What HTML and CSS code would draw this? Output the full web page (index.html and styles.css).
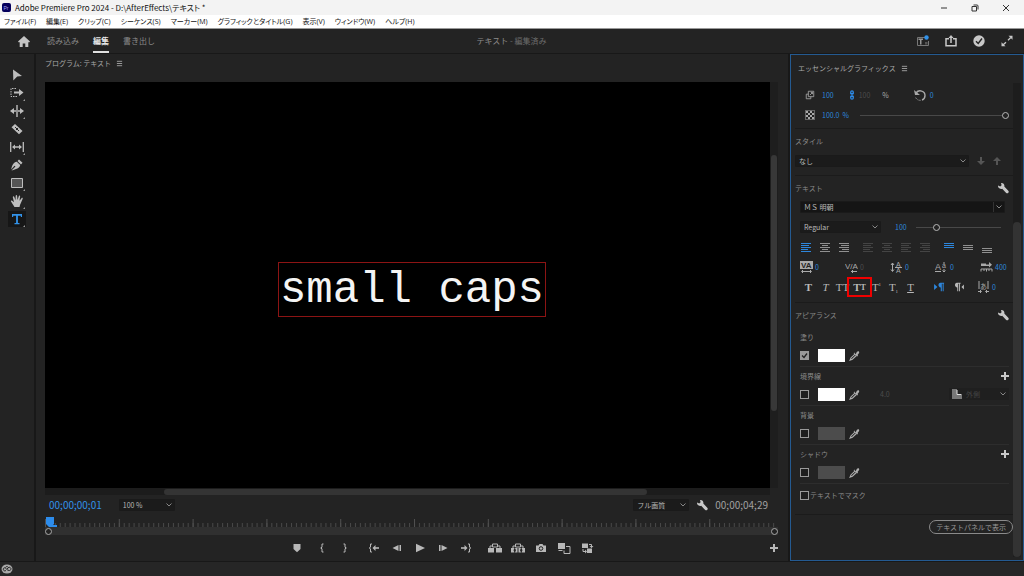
FILE: index.html
```html
<!DOCTYPE html>
<html lang="ja">
<head>
<meta charset="utf-8">
<meta name="viewport" content="width=device-width, initial-scale=1">
<title>Adobe Premiere Pro 2024</title>
<link rel="stylesheet" href="styles.css">
</head>
<body>
<svg class="sprite" aria-hidden="true">
  <symbol id="wrench" viewBox="0 0 12 12"><path d="M1 3.400 3.200 4.400 4.600 3.200 4 1C6 .5 7.900 2.200 7.300 4.600L11.500 9C12.300 10.400 10.600 12 9.200 11.100L5.200 6.700C2.800 7.500.7 5.700 1 3.400Z"/></symbol>
  <symbol id="menu" viewBox="0 0 8 8"><path d="M1 1.500H7M1 4H7M1 6.500H7" fill="none" stroke="currentColor"/></symbol>
  <symbol id="plus" viewBox="0 0 8 8"><path d="M3 0H5V3H8V5H5V8H3V5H0V3H3Z"/></symbol>
  <symbol id="dropper" viewBox="0 0 12 12"><path d="M6.200 3.500 7.300 4.600 8.500 2.200C9.500.6 11.800 1.300 11 3.300L9.300 5.500 9.900 6.200 8.800 7.200 5 3.500 6 2.600Z"/><path d="M6.500 4.500 2.300 8.400 1.200 11 3.700 10 8 6" fill="none" stroke="currentColor" stroke-width="1.200"/></symbol>
  <symbol id="lines-left" viewBox="0 0 12 10"><path d="M1 .5H11M1 2.500H9M1 4.500H11M1 6.500H8M1 8.500H11" stroke="currentColor"/></symbol>
  <symbol id="lines-center" viewBox="0 0 12 10"><path d="M1 .5H11M3 2.500H9M1 4.500H11M3 6.500H9M1 8.500H11" stroke="currentColor"/></symbol>
  <symbol id="lines-right" viewBox="0 0 12 10"><path d="M1 .5H11M3 2.500H11M1 4.500H11M4 6.500H11M1 8.500H11" stroke="currentColor"/></symbol>
</svg>

<header class="titlebar">
  <svg class="logo" viewBox="0 0 9 9"><rect width="9" height="9" rx="2" fill="#05005c"/><text x="1.500" y="6.500" font-size="5" fill="#a6a6f8">Pr</text></svg>
  <h1 class="window-title">Adobe Premiere Pro 2024 - D:\AfterEffects\テキスト *</h1>
  <div class="window-buttons">
    <button aria-label="最小化"><svg viewBox="0 0 8 8"><path d="M1 4H7"/></svg></button>
    <button aria-label="元に戻す"><svg viewBox="0 0 8 8"><path d="M2.500 1H6C6.700 1 7 1.300 7 2V5.500M1 2.500H5.500V7H1Z"/></svg></button>
    <button aria-label="閉じる"><svg viewBox="0 0 8 8"><path d="M1 1 7 7M7 1 1 7"/></svg></button>
  </div>
</header>
<nav class="menubar" aria-label="メニュー">
  <button>ファイル(F)</button><button>編集(E)</button><button>クリップ(C)</button><button>シーケンス(S)</button><button>マーカー(M)</button><button>グラフィックとタイトル(G)</button><button>表示(V)</button><button>ウィンドウ(W)</button><button>ヘルプ(H)</button>
</nav>

<div class="workspace-bar">
  <div class="workspace-tabs">
    <button class="home" aria-label="ホーム"><svg viewBox="0 0 12 11"><path d="M6 0 12 5.500 11 6.500 10.300 6V11H7.300V7.500H4.700V11H1.700V6L1 6.500 0 5.500Z"/></svg></button>
    <button class="tab">読み込み</button>
    <button class="tab active">編集</button>
    <button class="tab">書き出し</button>
  </div>
  <p class="project-name"><strong>テキスト</strong> - 編集済み</p>
  <div class="workspace-actions">
    <button aria-label="ワークスペース"><svg viewBox="0 0 12 12"><path d="M8 2.500H.5V10.500H11.500V6" fill="none" stroke="#777"/><path d="M1.500 3.500H6V5H4.500V9.500H3V5H1.500Z" fill="#999"/><path d="M8 7H10.500V9.500H8Z" fill="#555"/><circle cx="9.500" cy="2.500" r="2.200" fill="#3292e8"/></svg></button>
    <button aria-label="書き出し"><svg viewBox="0 0 12 12"><path d="M4 3.800H1V10.800H11V3.800H8M6 8V2" fill="none" stroke="currentColor" stroke-width="1.500"/><path d="M3.500 3 6 0 8.500 3Z"/></svg></button>
    <button aria-label="完了"><svg viewBox="0 0 12 12"><circle cx="6" cy="6" r="5.700"/><path d="M3 6.200 5.200 8.500 9 3.500" fill="none" stroke="#232323" stroke-width="1.400"/></svg></button>
    <button aria-label="全画面"><svg viewBox="0 0 12 12"><path d="M7.500.8H11.500V4.800ZM.5 7.200V11.200H4.500Z"/><path d="M9.800 2.500 7 5.200M5 7.200 2.200 9.800" stroke="currentColor" stroke-width="1.300"/></svg></button>
  </div>
</div>

<main class="workspace">
  <div class="tools" role="toolbar" aria-label="ツール">
    <button aria-label="選択"><svg viewBox="0 0 14 14"><path d="M3 1.500 12 8 7.200 8.500 3.300 12.500Z"/></svg></button>
    <button class="more" aria-label="トラック選択"><svg viewBox="0 0 14 14"><path d="M6 2.500H1V10.500H8" fill="none" stroke="currentColor" stroke-dasharray="1.500 1"/><path d="M4 5.500H9V3L13.500 6.500 9 10V7.500H4Z"/></svg></button>
    <button class="more" aria-label="リップル"><svg viewBox="0 0 14 14"><path d="M6.300 1H7.700V13H6.300ZM0 7 4 4V6.200H6V7.800H4V10ZM14 7 10 4V6.200H8V7.800H10V10Z"/></svg></button>
    <button aria-label="レーザー"><svg viewBox="0 0 14 14"><path d="M5 2 12.500 9 9 12.300 1.500 5.300Z"/><path d="M5 5 9 9M8 6 6 8" stroke="#232323"/></svg></button>
    <button class="more" aria-label="スリップ"><svg viewBox="0 0 14 14"><path d="M.7 2V12M13.300 2V12M4 7H10" stroke="currentColor" stroke-width="1.300"/><path d="M2 7 5 4.500V9.500ZM12 7 9 4.500V9.500Z"/></svg></button>
    <button aria-label="ペン"><svg viewBox="0 0 14 14"><path d="M9 1.500 12.500 4.800 11 6.500 7.500 3ZM6.800 3.700 10.200 7C9.800 9.500 7.500 11 1.500 12.500L5.500 8.500 4.500 7.800 1.200 11.500C2 7 3.500 4.300 6.800 3.700Z"/></svg></button>
    <button class="more" aria-label="長方形"><svg viewBox="0 0 14 14"><path d="M1.500 2.500H12.500V11.500H1.500Z" fill="#555" stroke="currentColor"/></svg></button>
    <button class="more" aria-label="手のひら"><svg viewBox="0 0 14 14"><path d="M4.500 13 1 7.500C.6 6.500 1.800 6 2.500 7L4 8.300 2.800 3.200C2.800 2 4 2 4.300 3L5.500 6.200 5.700 1.700C5.800.7 7 .7 7.100 1.700L7.500 6 8.800 2.200C9.200 1.200 10.300 1.600 10.100 2.600L9.500 6.700 11.500 4.200C12.200 3.400 13.100 4.100 12.600 5L10 11 9.500 13Z"/></svg></button>
    <button class="more selected" aria-label="文字"><svg viewBox="0 0 14 14"><path d="M2 2H12V5H10.800V3.700H7.900V11H9.500V12.200H4.500V11H6.100V3.700H3.200V5H2Z"/></svg></button>
  </div>

  <section class="program">
    <h2 class="panel-title">プログラム: テキスト <svg class="menu-icon"><use href="#menu"/></svg></h2>
    <div class="monitor">
      <div class="canvas"><div class="title-clip">small caps</div></div>
      <div class="vscroll"><div class="vthumb"></div></div>
    </div>
    <div class="hscroll"><div class="hthumb"></div></div>
    <div class="time-row">
      <span class="timecode current">00;00;00;01</span>
      <select class="select zoom" aria-label="ズーム"><option>100 %</option></select>
      <select class="select quality" aria-label="再生時の解像度"><option>フル画質</option></select>
      <button class="icon-button" aria-label="設定"><svg><use href="#wrench"/></svg></button>
      <span class="timecode">00;00;04;29</span>
    </div>
    <div class="ruler">
      <svg class="ticks" viewBox="0 0 729 10" preserveAspectRatio="none">
        <defs>
          <pattern id="minor" width="4.893" height="10" patternUnits="userSpaceOnUse"><path d="M0 6H1V10H0Z" fill="#484848"/></pattern>
          <pattern id="major" width="73.400" height="10" patternUnits="userSpaceOnUse"><path d="M0 2H1V10H0Z" fill="#505050"/></pattern>
        </defs>
        <path d="M0 0H729V10H0Z" fill="url(#minor)"/><path d="M0 0H729V10H0Z" fill="url(#major)"/>
      </svg>
      <svg class="playhead" viewBox="0 0 12 11"><path d="M1 0H9V7L6 10H4L1 7ZM6 8H12V10H6Z" fill="#2d8ceb"/></svg>
    </div>
    <div class="range"><span class="ring"></span><span class="ring"></span></div>
    <div class="transport">
      <span class="lead"></span>
      <div class="group"><button aria-label="マーカー"><svg viewBox="0 0 14 14"><path d="M3.500 3H10.500V8L7 11.300 3.500 8Z"/></svg></button></div>
      <div class="group in-out">
        <button aria-label="インをマーク"><svg viewBox="0 0 14 14"><path d="M8.500 3H7V6.200L5.700 7 7 7.800V11H8.500" class="line"/></svg></button>
        <button aria-label="アウトをマーク"><svg viewBox="0 0 14 14"><path d="M5.500 3H7V6.200L8.300 7 7 7.800V11H5.500" class="line"/></svg></button>
      </div>
      <div class="group">
        <button aria-label="インへ移動"><svg viewBox="0 0 14 14"><path d="M5 3H3.500V6.200L2.200 7 3.500 7.800V11H5" class="line"/><path d="M5.500 7 8.500 4V10Z"/><path d="M8 6.200H12V7.800H8Z"/></svg></button>
        <button aria-label="前のフレーム"><svg viewBox="0 0 14 14"><path d="M2.500 7 8.500 4V10ZM9.500 4H11V10H9.500Z"/></svg></button>
        <button aria-label="再生"><svg viewBox="0 0 14 14"><path d="M3 2.700 12 7 3 11.300Z"/></svg></button>
        <button aria-label="次のフレーム"><svg viewBox="0 0 14 14"><path d="M11.500 7 5.500 4V10ZM3 4H4.500V10H3Z"/></svg></button>
        <button aria-label="アウトへ移動"><svg viewBox="0 0 14 14"><path d="M9 3H10.500V6.200L11.800 7 10.500 7.800V11H9" class="line"/><path d="M8.500 7 5.500 4V10Z"/><path d="M2 6.200H6V7.800H2Z"/></svg></button>
      </div>
      <div class="group">
        <button aria-label="リフト"><svg viewBox="0 0 14 14"><path d="M0 7H6V11.500H0ZM8 7H14V11.500H8Z"/><path d="M4.500 3H9.500V6H4.500ZM2 7V5H4.500M9.500 5H12V7" class="line"/></svg></button>
        <button aria-label="抽出"><svg viewBox="0 0 14 14"><path d="M0 7H3.500L2.500 9.200 3.500 11.500H0ZM6.500 7V11.500H4L5 9.200 4 7ZM7.500 7H10L9 9.200 10 11.500H7.500ZM14 7V11.500H10.500L11.500 9.200 10.500 7Z"/><path d="M4.500 3H9.500V6H4.500ZM2 7V5H4.500M9.500 5H12V7" class="line"/></svg></button>
        <button aria-label="フレームを書き出し"><svg viewBox="0 0 14 14"><path d="M2 4.500H4.500L5.500 3H8.500L9.500 4.500H12V11H2Z"/><circle cx="7" cy="7.500" r="1.800" fill="none" stroke="#232323"/></svg></button>
        <button aria-label="比較表示"><svg viewBox="0 0 14 14"><path d="M1 2H8V8H1Z"/><path d="M9 5.500H13V12.500H7V9.500" class="line"/><path d="M1.500 9.500H5.500" class="line"/></svg></button>
        <button aria-label="プロキシ切り替え"><svg viewBox="0 0 14 14"><path d="M2 2.500H8V7H2ZM7 7.500H12V12H7Z"/><path d="M9 3.500H11.500V6.500M3 8V10.500H6" class="line"/><path d="M9.500 5H13.500L11.500 7ZM5 8.500V12.500L7 10.500Z"/></svg></button>
      </div>
      <span class="trail"></span>
      <button aria-label="ボタンエディター"><svg viewBox="-3 -3 14 14"><path d="M3 0H5V3H8V5H5V8H3V5H0V3H3Z"/></svg></button>
    </div>
  </section>

  <aside class="graphics">
    <h2 class="panel-title">エッセンシャルグラフィックス <svg class="menu-icon"><use href="#menu"/></svg></h2>
    <div class="scroll-area">
      <div class="controls">
        <section class="transform">
          <div class="scale-row">
            <svg class="row-icon" viewBox="0 0 12 12"><path d="M4 1.500H10.500V8H4ZM4 5H1.500V10.500H7V8M6 6 9 3M7 3H9V5" class="line"/></svg>
            <span class="value">100</span>
            <svg class="link-icon" viewBox="0 0 6 12"><path d="M1.500 5V2.500C1.500.6 4.500.6 4.500 2.500V5M1.500 7V9.500C1.500 11.400 4.500 11.400 4.500 9.500V7M3 3.500V8.500" fill="none" stroke="#2d8ceb" stroke-width="1.500"/></svg>
            <span class="value dim">100</span>
            <span class="unit">%</span>
            <svg class="rotate-icon" viewBox="0 0 12 12"><path d="M2 4C5 0 11 2 11 6.500 11 9 9.500 10.500 8 11" fill="none" stroke="currentColor" stroke-width="1.400"/><path d="M0 1 1 6H6Z"/><path d="M6.500 11.300C4 11.500 2 10 1.500 8" fill="none" stroke="currentColor" stroke-dasharray="1 1"/></svg>
            <span class="value">0</span>
          </div>
          <div class="opacity-row">
            <svg class="row-icon" viewBox="0 0 10 10"><path d="M1 1H3V3H1ZM5 1H7V3H5ZM3 3H5V5H3ZM7 3H9V5H7ZM1 5H3V7H1ZM5 5H7V7H5ZM3 7H5V9H3ZM7 7H9V9H7Z"/><path d="M.5.5H9.500V9.500H.5Z" fill="none" stroke="currentColor" stroke-dasharray="1 1"/></svg>
            <span class="value">100.0 &nbsp;%</span>
            <input type="range" min="0" max="100" value="100" aria-label="不透明度">
          </div>
        </section>

        <section class="style-section">
          <h3 class="heading">スタイル</h3>
          <div class="style-row">
            <select class="select" aria-label="スタイル"><option>なし</option></select>
            <button aria-label="下へ"><svg viewBox="0 0 8 8"><path d="M3 0H5V4H8L4 8 0 4H3Z"/></svg></button>
            <button aria-label="上へ"><svg viewBox="0 0 8 8"><path d="M3 8H5V4H8L4 0 0 4H3Z"/></svg></button>
          </div>
        </section>

        <section class="text-section">
          <div class="heading-row"><h3 class="heading">テキスト</h3><button class="icon-button" aria-label="テキスト設定"><svg><use href="#wrench"/></svg></button></div>
          <div class="font-row"><select class="select font" aria-label="フォント"><option>ＭＳ 明朝</option></select></div>
          <div class="weight-row">
            <select class="select" aria-label="フォントスタイル"><option>Regular</option></select>
            <span class="value">100</span>
            <input type="range" min="0" max="400" value="90" aria-label="フォントサイズ">
          </div>
          <div class="align-row">
            <div class="align-group">
              <button class="on" aria-label="左揃え"><svg><use href="#lines-left"/></svg></button>
              <button aria-label="中央揃え"><svg><use href="#lines-center"/></svg></button>
              <button aria-label="右揃え"><svg><use href="#lines-right"/></svg></button>
            </div>
            <div class="align-group off">
              <button aria-label="均等配置左"><svg><use href="#lines-left"/></svg></button>
              <button aria-label="均等配置中央"><svg><use href="#lines-center"/></svg></button>
              <button aria-label="両端揃え"><svg><use href="#lines-left"/></svg></button>
              <button aria-label="均等配置右"><svg><use href="#lines-right"/></svg></button>
            </div>
            <div class="align-group">
              <button class="on" aria-label="上揃え"><svg viewBox="0 0 12 10"><path d="M1 .5H11M1 2.500H11M1 4.500H11" stroke="currentColor"/></svg></button>
              <button aria-label="上下中央"><svg viewBox="0 0 12 10"><path d="M1 2.500H11M1 4.500H11M1 6.500H11" stroke="currentColor"/></svg></button>
              <button aria-label="下揃え"><svg viewBox="0 0 12 10"><path d="M1 5.500H11M1 7.500H11M1 9.500H11" stroke="currentColor"/></svg></button>
            </div>
          </div>
          <div class="metric-row">
            <div class="metric"><svg viewBox="0 0 13 12"><path d="M0 0H13V8H0Z"/><text x="1" y="7" font-size="8" font-weight="700" fill="#232323">VA</text><path d="M2 10.500H11M3 9 1.500 10.500 3 12M10 9 11.500 10.500 10 12" class="line"/></svg><span class="value">0</span></div>
            <div class="metric"><svg viewBox="0 0 13 12"><text x="0" y="8" font-size="8">V/A</text><path d="M6 10.500H12M8 9 6.500 10.500 8 12" class="line"/></svg><span class="value dim">0</span></div>
            <div class="metric"><svg viewBox="0 0 13 12"><text x="6" y="6" font-size="7">A</text><text x="6" y="12" font-size="7">A</text><path d="M5 6.500H12M2.500 2V10M1 4 2.500 2 4 4M1 8.500 2.500 10.500 4 8.500" class="line"/></svg><span class="value">0</span></div>
            <div class="metric"><svg viewBox="0 0 13 12"><text x="0" y="9" font-size="9">A</text><text x="7" y="7" font-size="7">a</text><path d="M0 10.500H6M9 3V1M9 8V11M7.500 9.500 9 11 10.500 9.500" class="line"/></svg><span class="value">0</span></div>
            <div class="metric"><svg viewBox="0 0 13 12"><path d="M1 2.500H6V5H1ZM6 3.500H9V1L12 3.800 9 6.500V5H6Z"/><path d="M1 8H12M1 10.500V8M4 10V8M6.500 10.500V8M9 10V8M12 10.500V8" class="line"/></svg><span class="value">400</span></div>
          </div>
          <div class="faux-row">
            <div class="faux-group">
              <button aria-label="太字"><b>T</b></button>
              <button aria-label="斜体"><i>T</i></button>
              <button aria-label="オールキャップス">TT</button>
              <button class="marked" aria-label="スモールキャップス">T<small>T</small></button>
              <button aria-label="上付き">T<sup>1</sup></button>
              <button aria-label="下付き">T<sub>1</sub></button>
              <button aria-label="下線"><u>T</u></button>
            </div>
            <div class="direction">
              <button class="on" aria-label="左から右"><svg viewBox="0 0 13 12"><path d="M0 2.500 4 6 0 9.500ZM7.500 1H12V2.200H11.500V11H10.300V2.200H9.300V11H8V6.500C4.500 6.500 4.500 1 7.500 1Z"/></svg></button>
              <button aria-label="右から左"><svg viewBox="0 0 13 12"><path d="M13 3 10 6 13 9ZM4.500 1H9V2.200H8.300V11H7.200V2.200H6.200V11H5V6.500C1.500 6.500 1.500 1 4.500 1Z"/></svg></button>
            </div>
            <div class="metric tsume"><svg viewBox="0 0 13 12"><text x="3" y="8" font-size="7">あ</text><path d="M2 0V8M11 0V8M1 10.500H4M9 10.500H12M3 9 4.500 10.500 3 12M10 9 8.500 10.500 10 12" class="line"/></svg><span class="value">0</span></div>
          </div>
        </section>

        <section class="appearance">
          <div class="heading-row"><h3 class="heading">アピアランス</h3><button class="icon-button" aria-label="アピアランス設定"><svg><use href="#wrench"/></svg></button></div>
          <div class="paint">
            <div class="paint-head"><label for="fill-on">塗り</label></div>
            <div class="paint-row"><input type="checkbox" id="fill-on" checked><button class="swatch" aria-label="塗りの色"></button><button class="dropper" aria-label="塗りのスポイト"><svg><use href="#dropper"/></svg></button></div>
          </div>
          <div class="paint">
            <div class="paint-head"><label for="stroke-on">境界線</label><button class="add" aria-label="境界線を追加"><svg><use href="#plus"/></svg></button></div>
            <div class="paint-row"><input type="checkbox" id="stroke-on"><button class="swatch" aria-label="境界線の色"></button><button class="dropper" aria-label="境界線のスポイト"><svg><use href="#dropper"/></svg></button><span class="stroke-width">4.0</span>
              <div class="stroke-type"><svg viewBox="0 0 10 10"><path d="M0 0H5V5H10V10H0Z" fill="#777"/><path d="M5 1V5.500H9" fill="none" stroke="#ddd"/></svg><select class="select" aria-label="境界線の種類" disabled><option>外側</option></select></div></div>
          </div>
          <div class="paint">
            <div class="paint-head"><label for="back-on">背景</label></div>
            <div class="paint-row"><input type="checkbox" id="back-on"><button class="swatch muted" aria-label="背景の色"></button><button class="dropper" aria-label="背景のスポイト"><svg><use href="#dropper"/></svg></button></div>
          </div>
          <div class="paint">
            <div class="paint-head"><label for="shadow-on">シャドウ</label><button class="add" aria-label="シャドウを追加"><svg><use href="#plus"/></svg></button></div>
            <div class="paint-row"><input type="checkbox" id="shadow-on"><button class="swatch muted" aria-label="シャドウの色"></button><button class="dropper" aria-label="シャドウのスポイト"><svg><use href="#dropper"/></svg></button></div>
          </div>
          <label class="mask"><input type="checkbox">テキストでマスク</label>
        </section>
        <div class="footer"><button class="pill">テキストパネルで表示</button></div>
      </div>
      <div class="side-track"><div class="side-thumb"></div></div>
    </div>
  </aside>
</main>

<footer class="status"><svg viewBox="0 0 12 10"><ellipse cx="6" cy="5" rx="5.500" ry="4.500" fill="#aaa"/><path d="M5 6.500C2 8 1.500 4 3.500 3.800 5 3.700 6 6.800 8.500 6.500 11 6 10 3 8 3.300 7 3.400 6.500 4.500 6 5M4.500 3.500C5 2.500 6 2.300 6.800 2.800" fill="none" stroke="#222"/></svg></footer>
</body>
</html>
```
FILE: styles.css
```css
* { box-sizing: border-box; }

body {
  margin: 0;
  min-height: 100vh;
  display: flex;
  flex-direction: column;
  background: #181818;
  color: #a8a8a8;
  font-family: "Noto Sans CJK JP", sans-serif;
  font-size: 7px;
  line-height: 12px;
}

h1, h2, h3, p { margin: 0; font-size: inherit; font-weight: 400; }
svg { display: block; fill: currentColor; }
svg text { font-family: "Liberation Sans", "Noto Sans CJK JP", sans-serif; }
.line { fill: none; stroke: currentColor; }
.sprite { position: absolute; width: 0; height: 0; }

button {
  margin: 0;
  padding: 0;
  border: 0;
  background: none;
  color: inherit;
  font: inherit;
  display: flex;
  align-items: center;
  justify-content: center;
}

/* Window chrome */
.titlebar {
  height: 15px;
  display: flex;
  align-items: center;
  gap: 4px;
  padding: 0 14px 0 2px;
  background: #f3f3f3;
  color: #111;
}
.logo { width: 9px; height: 9px; }
.window-title { font-size: 8px; font-feature-settings: "palt"; }
.window-buttons { display: flex; gap: 23px; margin-left: auto; }
.window-buttons svg { width: 8px; height: 8px; fill: none; stroke: #333; }

.menubar {
  height: 13px;
  display: flex;
  gap: 10px;
  padding: 0 4px;
  background: #fff;
  color: #111;
  font-family: "Open Sans", "Noto Sans CJK JP", sans-serif;
  font-feature-settings: "palt";
  white-space: nowrap;
}

.workspace-bar {
  height: 26px;
  display: grid;
  grid-template-columns: 1fr auto 1fr;
  align-items: center;
  padding: 0 11px 0 18px;
  border-top: 1px solid #999;
  border-bottom: 1px solid #181818;
  background: #232323;
  font-size: 8px;
}
.workspace-tabs { display: flex; align-self: stretch; }
.home { color: #c4c4c4; margin-right: 17px; }
.home svg { width: 12px; height: 11px; }
.tab { margin-right: 14px; color: #8a8a8a; border-top: 2px solid transparent; border-bottom: 2px solid transparent; }
.tab.active { color: #e8e8e8; font-weight: 700; border-bottom-color: #e0e0e0; }
.project-name { padding-right: 8px; color: #6c6c6c; }
.project-name strong { font-weight: 400; color: #8c8c8c; }
.workspace-actions { display: flex; justify-content: flex-end; gap: 16px; color: #c8c8c8; }
.workspace-actions svg { width: 12px; height: 12px; }

/* Panels */
.workspace {
  flex: 1;
  display: grid;
  grid-template-columns: 34px 1fr 234px;
  gap: 2px;
}
.panel-title { display: flex; align-items: center; gap: 5px; color: #a8a8a8; }
.menu-icon { width: 7px; height: 7px; }

.tools {
  display: flex;
  flex-direction: column;
  align-items: center;
  gap: 2px;
  padding-top: 13px;
  background: #232323;
  color: #bdbdbd;
}
.tools button { position: relative; width: 18px; height: 16px; }
.tools svg { width: 14px; height: 14px; }
.tools .more::after {
  content: "";
  position: absolute;
  right: 1px;
  bottom: 0;
  border: 1px solid #999;
  border-top-color: transparent;
  border-left-color: transparent;
}
.tools .selected { background: #161616; color: #3292e8; }

/* Program monitor */
.program {
  display: flex;
  flex-direction: column;
  min-width: 0;
  padding: 3px 10px 6px 9px;
  background: #232323;
}
.program .panel-title { margin-bottom: 13px; }
.monitor { flex: 1; display: flex; }
.canvas { flex: 1; display: grid; place-content: center; padding: 9px 0 0 9px; background: #000; }
.title-clip {
  padding: 3px 1px 1px;
  border: 1px solid #8c1414;
  color: #f4f4f4;
  font-family: "Liberation Mono", monospace;
  font-size: 44px;
  line-height: 49px;
  white-space: pre;
}
.vscroll { width: 8px; padding-top: 73px; background: #1e1e1e; }
.vthumb { width: 6px; height: 77%; margin-left: 1px; border-radius: 3px; background: #383838; }
.hscroll { height: 7px; margin-right: 8px; padding: 1px 0 0 3px; background: #1c1c1c; }
.hthumb { width: 67%; height: 6px; margin-left: 16%; border-radius: 3px; background: #343434; }

.time-row { height: 20px; display: flex; align-items: center; padding: 0 10px 0 4px; }
.timecode { font-size: 10px; color: #a0a0a0; }
.timecode.current { color: #3292e8; }
.time-row .icon-button { margin: 0 7px; }
.zoom { width: 56px; margin-left: 17px; }
.quality { width: 56px; margin-left: auto; }
.icon-button { color: #c8c8c8; }
.icon-button svg { width: 12px; height: 12px; }

.select {
  height: 12px;
  min-width: 0;
  padding: 0 12px 0 3px;
  border: 1px solid #1a1a1a;
  border-radius: 1px;
  appearance: none;
  color: #b8b8b8;
  font: inherit;
  line-height: 10px;
  background: #1b1b1b url("data:image/svg+xml,%3Csvg xmlns='http://www.w3.org/2000/svg' width='6' height='4'%3E%3Cpath d='M.5.5 3 3 5.500.5' fill='none' stroke='%23888'/%3E%3C/svg%3E") no-repeat right 2px center;
}

.ruler { position: relative; height: 12px; padding-top: 2px; }
.ticks { width: 100%; height: 10px; }
.playhead { position: absolute; left: 0; top: 2px; width: 12px; height: 11px; }
.range { height: 8px; display: flex; align-items: center; justify-content: space-between; background: #303030; }
.ring { width: 7px; height: 7px; border: 1px solid #a8a8a8; border-radius: 50%; background: #232323; }

.transport { display: flex; align-items: center; padding-top: 6px; margin-right: -3px; color: #b8b8b8; }
.transport button, .transport svg { width: 14px; height: 14px; }
.transport .lead { flex: 14; }
.transport .trail { flex: 9; }
.group { display: flex; gap: 9px; margin-right: 15px; }
.group:nth-child(2) { margin-right: 11px; }

/* Essential Graphics */
.graphics {
  display: flex;
  flex-direction: column;
  border: 1px solid #245a91;
  background: #232323;
  padding: 7px 2px 3px 4px;
}
.graphics .panel-title { padding-left: 3px; margin-bottom: 9px; }
.scroll-area { flex: 1; display: flex; }
.controls { flex: 1; min-width: 0; display: flex; flex-direction: column; }
.side-track { width: 8px; padding-top: 139px; background: #1d1d1d; }
.side-thumb { height: 100%; border-radius: 4px; background: #333; }
.value { color: #2d86dc; white-space: nowrap; }
.value.dim { color: #4c4c4c; }
.row-icon { width: 10px; height: 10px; flex: none; }
.rotate-icon { width: 12px; height: 12px; flex: none; }
.transform { padding: 6px 4px 7px 10px; border-bottom: 1px solid #1b1b1b; }
.scale-row, .opacity-row { display: flex; align-items: center; height: 12px; }
.scale-row { margin-bottom: 8px; }
.scale-row .value { margin-left: 7px; }
.opacity-row .value { margin: 0 11px 0 7px; }
.link-icon { width: 6px; height: 10px; margin-left: 15px; }
.scale-row .dim { margin-left: 4px; }
.unit { margin: 0 25px 0 12px; }
.scale-row .value:last-child { margin-left: 4px; }

input[type="range"] {
  flex: 1;
  appearance: none;
  min-width: 0;
  height: 8px;
  margin: 0;
  background: linear-gradient(#484848, #484848) center / 100% 1px no-repeat;
}
input[type="range"]::-webkit-slider-thumb {
  appearance: none;
  width: 7px;
  height: 7px;
  border: 1px solid #b8b8b8;
  border-radius: 50%;
  background: #232323;
}

.heading { color: #8a8a8a; }
.style-section { padding: 6px 12px 8px 0; border-bottom: 1px solid #1b1b1b; }
.style-row { display: flex; align-items: center; gap: 8px; margin-top: 8px; color: #555; }
.style-row .select { flex: 1; }
.style-row svg { width: 8px; height: 8px; }

.heading-row { display: flex; justify-content: space-between; align-items: center; }
.text-section { padding: 6px 4px 8px 0; border-bottom: 1px solid #1b1b1b; }
.text-section > :not(.heading-row) { margin-left: 5px; }
.font-row { position: relative; display: flex; margin-top: 7px; padding-right: 4px; }
.font { flex: 1; background-color: #151515; }
.font-row::after {
  content: "";
  position: absolute;
  right: 15px;
  top: 1px;
  width: 1px;
  height: 10px;
  background: #333;
}
.weight-row { display: flex; align-items: center; margin-top: 8px; padding-right: 8px; }
.weight-row .select { width: 81px; }
.weight-row .value { margin: 0 9px 0 14px; }
.align-row { display: flex; gap: 12px; margin-top: 10px; color: #909090; }
.align-group { display: flex; gap: 7px; }
.align-group svg { width: 12px; height: 10px; }
.align-group.off { color: #444; }
.align-group .on, .direction .on { color: #2d86dc; }
.metric-row { display: grid; grid-template-columns: repeat(4, 45px) auto; margin-top: 8px; }
.metric { display: flex; align-items: center; gap: 2px; color: #aaa; }
.metric svg { width: 13px; height: 12px; }
.faux-row { display: flex; align-items: center; margin-top: 7px; color: #b8b8b8; }
.faux-group, .direction { display: flex; }
.faux-group button {
  width: 17px;
  height: 14px;
  font-family: "Liberation Serif", serif;
  font-size: 11px;
}
.faux-group small { font-size: 8px; font-weight: 700; padding-top: 2px; }
.faux-group .marked { font-weight: 700; }
.faux-group sup, .faux-group sub { font-size: 5px; line-height: 5px; }
.faux-group sup { align-self: flex-start; padding-top: 2px; }
.faux-group sub { align-self: flex-end; }
.marked { position: relative; }
.marked::after { content: ""; position: absolute; inset: -3px -4px; border: 2px solid #f00000; }
.direction { gap: 6px; margin: 0 12px 0 14px; }
.direction svg { width: 13px; height: 10px; }

.appearance { padding: 6px 4px 13px 0; border-bottom: 1px solid #1b1b1b; }
.appearance .heading-row { margin-bottom: 7px; }
.paint { border-bottom: 1px solid #2d2d2d; margin-left: 5px; padding: 2px 0 4px; }
.paint-head { display: flex; align-items: center; justify-content: space-between; height: 13px; color: #8a8a8a; }
.add { color: #c8c8c8; }
.add svg { width: 8px; height: 8px; }
.paint-row { display: flex; align-items: center; height: 14px; margin-top: 5px; }
input[type="checkbox"] {
  appearance: none;
  width: 9px;
  height: 9px;
  margin: 0;
  border: 1px solid #999;
  background: #1e1e1e;
}
input[type="checkbox"]:checked {
  background: #999 url("data:image/svg+xml,%3Csvg xmlns='http://www.w3.org/2000/svg' width='7' height='7'%3E%3Cpath d='M1 3.500 3 5.500 6 1.500' fill='none' stroke='%23222' stroke-width='1.300'/%3E%3C/svg%3E") center no-repeat;
}
.swatch { width: 27px; height: 13px; margin: 0 4px 0 9px; background: #fff; }
.swatch.muted { background: #4c4c4c; }
.dropper { color: #b0b0b0; }
.dropper svg { width: 11px; height: 11px; }
.stroke-width { margin-left: 20px; color: #4c4c4c; }
.stroke-type { width: 60px; display: flex; align-items: center; margin-left: auto; padding-left: 3px; background: #1f1f1f; }
.stroke-type svg { width: 10px; height: 10px; }
.stroke-type .select { flex: 1; border-color: transparent; background-color: transparent; color: #454545; opacity: 1; }
.mask { display: flex; align-items: center; gap: 1px; margin: 5px 0 0 5px; color: #8a8a8a; }

.footer { display: flex; justify-content: flex-end; padding-top: 5px; }
.pill { height: 14px; padding: 0 6px; border: 1px solid #8a8a8a; border-radius: 7px; color: #999; white-space: nowrap; }

.status { height: 15px; display: flex; align-items: center; padding-left: 1px; border-top: 1px solid #181818; background: #262626; }
.status svg { width: 12px; height: 10px; }
```
